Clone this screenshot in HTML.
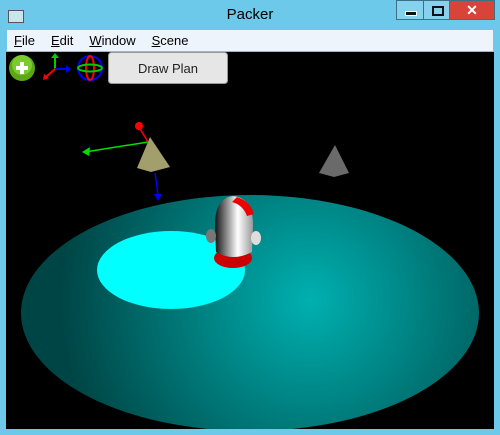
<!DOCTYPE html>
<html><head><style>
body{margin:0;width:500px;height:435px;overflow:hidden;background:#6dc9e9;font-family:"Liberation Sans",sans-serif;position:relative}
.title{position:absolute;left:0;top:0;width:500px;height:31px;text-align:center;font-size:15px;line-height:30px;color:#000}
.menu{position:absolute;left:7px;top:30px;width:486px;height:21px;background:#eef4fb;font-size:13px;line-height:21px}
.menu span{margin-left:7px;margin-right:9px}
.vp{position:absolute;left:6px;top:52px;width:488px;height:377px;background:#000;overflow:hidden}
.btn{position:absolute;width:26px;height:20px;top:0;border:1px solid #3d6f86;box-sizing:border-box}
</style></head><body>
<div class="title">Packer</div>
<div style="position:absolute;left:8px;top:10px;width:14px;height:11px;background:#cfe3ea;border:1px solid #555"></div>
<div class="btn" style="left:396px;width:28px;background:#86d2ee"><div style="position:absolute;left:8px;top:10px;width:10px;height:3px;background:#111;border:1px solid #fff"></div></div>
<div class="btn" style="left:423px;width:27px;background:#86d2ee"><div style="position:absolute;left:8px;top:5px;width:8px;height:6px;border:2px solid #111"></div></div>
<div class="btn" style="left:449px;width:46px;background:#d9443a;color:#fff;font-weight:bold;font-size:14px;text-align:center;line-height:18px">✕</div>
<div class="menu"><span><u>F</u>ile</span><span><u>E</u>dit</span><span><u>W</u>indow</span><span><u>S</u>cene</span></div>
<div class="vp">
<svg width="488" height="377" viewBox="6 52 488 377">
<defs>
<radialGradient id="g" cx="310" cy="300" r="250" gradientUnits="userSpaceOnUse">
<stop offset="0" stop-color="#00b0b0"/><stop offset="1" stop-color="#004545"/></radialGradient>
<linearGradient id="r" x1="0" x2="1"><stop offset="0" stop-color="#111"/><stop offset=".6" stop-color="#fff"/><stop offset="1" stop-color="#999"/></linearGradient>
</defs>
<ellipse cx="250" cy="313" rx="229" ry="118" fill="url(#g)"/>
<ellipse cx="171" cy="270" rx="74" ry="39" fill="#00ffff"/>
<polygon points="150,137 137,168 151,172 170,167" fill="#a39f6c"/>
<polygon points="335,145 319,173 334,177 349,173" fill="#6a6a6a"/>
<line x1="148" y1="142" x2="85" y2="152" stroke="#00e000" stroke-width="1.5"/>
<polygon points="82,152 90,147 89,156" fill="#00e000"/>
<line x1="148" y1="142" x2="139" y2="127" stroke="#f00" stroke-width="1.5"/>
<circle cx="139" cy="126" r="4" fill="#f00"/>
<line x1="155" y1="173" x2="158" y2="195" stroke="#00f" stroke-width="1.5"/>
<polygon points="154,194 162,194 158,201" fill="#00f"/>
<ellipse cx="233" cy="258" rx="19" ry="10" fill="#c00"/>
<path d="M215 225 Q215 198 233 196 Q253 198 253 225 L252 252 Q233 262 216 252 Z" fill="url(#r)"/>
<path d="M237 197 Q250 201 254 214 L247 216 Q243 205 232 202Z" fill="#e00"/>
<ellipse cx="211" cy="236" rx="5" ry="7" fill="#777"/>
<ellipse cx="256" cy="238" rx="5" ry="7" fill="#ddd"/>
</svg>
<svg style="position:absolute;left:0;top:0" width="225" height="34">
<circle cx="16" cy="16" r="13" fill="#5aa818"/><circle cx="16" cy="13" r="10" fill="#7ccb2e"/>
<rect x="10" y="14" width="12" height="4" fill="#fff"/><rect x="14" y="10" width="4" height="12" fill="#fff"/>
<line x1="49" y1="17" x2="49" y2="5" stroke="#0c0" stroke-width="2"/><polygon points="45,6 53,6 49,1" fill="#0c0"/>
<line x1="49" y1="17" x2="61" y2="17" stroke="#00f" stroke-width="2"/><polygon points="60,13 60,21 65,17" fill="#00f"/>
<line x1="49" y1="17" x2="40" y2="25" stroke="#f00" stroke-width="2"/><polygon points="37,28 38,22 43,26" fill="#f00"/>
<circle cx="84" cy="16" r="12" fill="none" stroke="#00f" stroke-width="2"/>
<ellipse cx="84" cy="16" rx="4" ry="12" fill="none" stroke="#f00" stroke-width="2"/>
<ellipse cx="84" cy="16" rx="12" ry="3.5" fill="none" stroke="#0c0" stroke-width="2"/>
<rect x="102.5" y="0.5" width="119" height="31" rx="3" fill="#e6e6e6" stroke="#999"/>
<text x="162" y="21" text-anchor="middle" font-size="13" font-family="Liberation Sans,sans-serif" fill="#222">Draw Plan</text>
</svg>
</div>
</body></html>
